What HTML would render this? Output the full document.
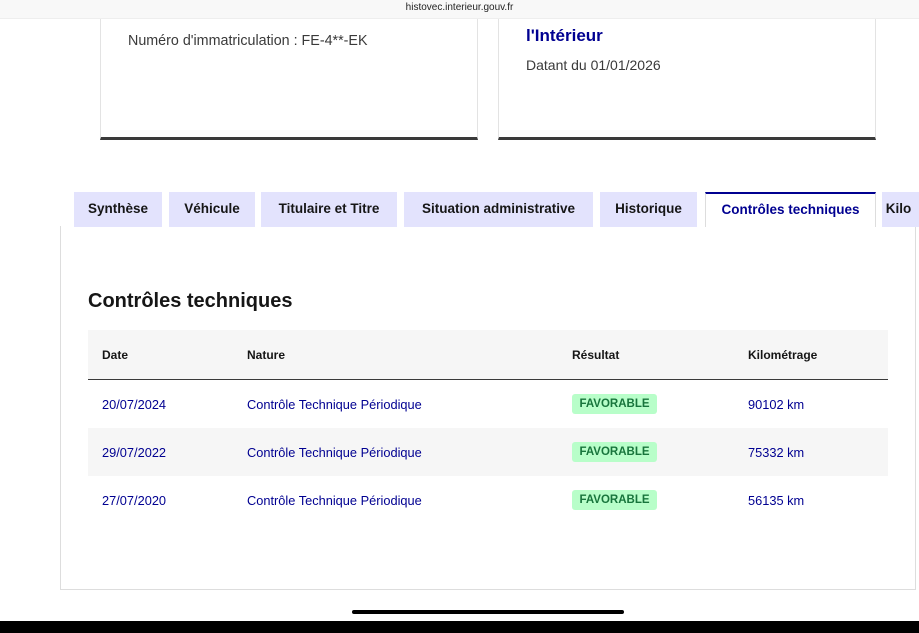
<!DOCTYPE html>
<html><head><meta charset="utf-8"><style>
*{margin:0;padding:0;box-sizing:border-box}
body{width:919px;height:633px;overflow:hidden;background:#fff;font-family:"Liberation Sans",sans-serif;position:relative;color:#161616}
.abs{position:absolute}
.url{left:0;top:0;width:919px;height:19px;background:#f8f8f8;border-bottom:1px solid #eee;font-size:10px;text-align:center;line-height:16px;color:#222}
.card{top:19px;height:121px;border-left:1px solid #e3e3e3;border-right:1px solid #e3e3e3;border-bottom:3px solid #3a3a3a}
.tab{top:192px;height:35px;background:#e3e3fd;font-size:13.5px;font-weight:bold;line-height:34px;text-align:center;color:#161616}
.panel{left:60px;top:226px;width:856px;height:364px;border:1px solid #ddd;border-top:none}
.row{left:88px;width:800px;height:48px;font-size:12.8px;color:#000091}
.row span{position:absolute;top:17px}
.badge{position:absolute;left:484px;top:14px;width:85px;height:20px;background:#b8fec9;color:#18753c;font-weight:bold;font-size:11.5px;text-align:center;line-height:20px;border-radius:3px}
</style></head><body>
<div class="abs url">histovec.interieur.gouv.fr</div>
<div class="abs card" style="left:100px;width:378px"></div>
<div class="abs card" style="left:498px;width:378px"></div>
<div class="abs" style="left:128px;top:33px;font-size:14.3px;color:#3a3a3a">Numéro d'immatriculation : FE-4**-EK</div>
<div class="abs" style="left:526px;top:26px;font-size:17px;font-weight:bold;color:#000091">l'Intérieur</div>
<div class="abs" style="left:526px;top:57px;font-size:14px;color:#3a3a3a">Datant du 01/01/2026</div>
<div class="abs panel"></div>
<div class="abs tab" style="left:74px;width:88px">Synthèse</div>
<div class="abs tab" style="left:169px;width:86px">Véhicule</div>
<div class="abs tab" style="left:261px;width:136px">Titulaire et Titre</div>
<div class="abs tab" style="left:404px;width:189px">Situation administrative</div>
<div class="abs tab" style="left:600px;width:97px">Historique</div>
<div class="abs tab" style="left:705px;width:171px;background:#fff;color:#000091;border-top:2px solid #000091;border-left:1px solid #ddd;border-right:1px solid #ddd;height:35px;line-height:32px">Contrôles techniques</div>
<div class="abs tab" style="left:882px;width:60px;text-align:left;">&nbsp;Kilo</div>
<div class="abs" style="left:88px;top:290px;font-size:20px;font-weight:bold;color:#161616">Contrôles techniques</div>
<div class="abs row" style="top:330px;height:50px;background:#f6f6f6;border-bottom:1px solid #3a3a3a;color:#161616;font-weight:bold;font-size:12px">
<span style="left:14px;top:18px">Date</span><span style="left:159px;top:18px">Nature</span><span style="left:484px;top:18px">Résultat</span><span style="left:660px;top:18px">Kilométrage</span></div>
<div class="abs row" style="top:380px"><span style="left:14px">20/07/2024</span><span style="left:159px">Contrôle Technique Périodique</span><div class="badge">FAVORABLE</div><span style="left:660px">90102 km</span></div>
<div class="abs row" style="top:428px;background:#f6f6f6"><span style="left:14px">29/07/2022</span><span style="left:159px">Contrôle Technique Périodique</span><div class="badge">FAVORABLE</div><span style="left:660px">75332 km</span></div>
<div class="abs row" style="top:476px"><span style="left:14px">27/07/2020</span><span style="left:159px">Contrôle Technique Périodique</span><div class="badge">FAVORABLE</div><span style="left:660px">56135 km</span></div>
<div class="abs" style="left:352px;top:610px;width:272px;height:4px;border-radius:2px;background:#000"></div>
<div class="abs" style="left:0;top:621px;width:919px;height:12px;background:#000"></div>
</body></html>
